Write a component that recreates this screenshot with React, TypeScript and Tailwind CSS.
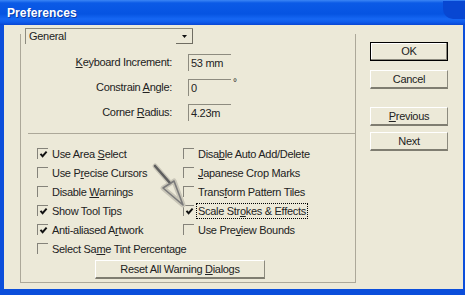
import type { ReactNode } from "react";

// Illustrator-style "Preferences" dialog, XP Luna frame

function Field({ label, value, degree }: { label: ReactNode; value: string; degree?: boolean }) {
  return (
    <div className="flex items-center h-[17px]">
      <span className="w-[151px] text-right whitespace-nowrap">{label}</span>
      <span className="ml-[16px] w-[43px] h-[17px] border-t border-l border-[#8d8b7f] pl-[2px] leading-[16px] whitespace-nowrap overflow-hidden">
        {value}
      </span>
      {degree && (
        <span className="self-start ml-[2px] -mt-[1px] text-[10px] leading-none">°</span>
      )}
    </div>
  );
}

function Check({
  checked = false,
  focused = false,
  children,
}: {
  checked?: boolean;
  focused?: boolean;
  children: ReactNode;
}) {
  return (
    <div className="flex items-center h-[19px] whitespace-nowrap">
      <span className="w-[11px] h-[11px] shrink-0 border-t border-l border-[#85837a] flex items-center justify-center">
        {checked && (
          <svg width="9" height="9" viewBox="0 0 9 9">
            <path d="M1.5 3.8 L3.6 6.2 L7.6 1.6" stroke="#111" strokeWidth="1.9" fill="none" />
          </svg>
        )}
      </span>
      <span
        className={`leading-[14px] ${
          focused ? "ml-[3px] px-[1px] outline outline-1 outline-dotted outline-black" : "ml-[4px]"
        }`}
      >
        {children}
      </span>
    </div>
  );
}

function Btn({ children, primary = false, className = "" }: { children: ReactNode; primary?: boolean; className?: string }) {
  return (
    <div
      className={`h-[19px] flex items-center justify-center whitespace-nowrap ${
        primary
          ? "border border-black shadow-[inset_-1px_-1px_0_#8c8a7e,inset_1px_1px_0_#fff]"
          : "border-t border-l border-t-white border-l-white border-r border-b-2 border-r-[#8c8a7e] border-b-[#7f7d71]"
      } ${className}`}
    >
      {children}
    </div>
  );
}

function Arrow() {
  return (
    <svg
      className="absolute left-0 top-0 pointer-events-none"
      width="465"
      height="295"
      viewBox="0 0 465 295"
    >
      <defs>
        <filter id="soft" x="-20%" y="-20%" width="140%" height="140%">
          <feGaussianBlur stdDeviation="0.7" />
        </filter>
      </defs>
      <g filter="url(#soft)" fill="none" strokeLinejoin="round" strokeLinecap="round">
        <path d="M155 166 L170 183 M163 188 L174 181 L183 205 Z" stroke="#c9c6b8" strokeWidth="5" />
        <path d="M155 166 L170 183" stroke="#5e5e5e" strokeWidth="2.6" />
        <path d="M163 188 L174 181 L183 205 Z" stroke="#7a7a7a" strokeWidth="1.6" />
      </g>
    </svg>
  );
}

export default function App() {
  return (
    <div className="relative w-[465px] h-[295px] overflow-hidden bg-[#0b4edb] flex flex-col font-['Liberation_Sans',Arial,sans-serif] text-[11px] tracking-[-0.3px] text-[#222]">
      <div className="h-[25px] shrink-0 flex items-center pl-[7px] bg-[linear-gradient(180deg,#3b86f5_0px,#0b5ae6_3px,#0654e2_14px,#1667f3_19px,#0f5cec_22px,#0846d4_25px)]">
        <span className="text-white font-bold text-[12px] tracking-[0.1px] [text-shadow:1px_1px_0_#0a3aa8]">
          Preferences
        </span>
        <span className="ml-auto w-[22px] h-[18px] -mt-[6px] rounded-bl-[10px] bg-[#0847d2]" />
      </div>

      <div className="flex-1 ml-[4px] mr-[2px] mb-[6px] bg-[#ece9d8] flex">
        {/* main group */}
        <div className="ml-[16px] mt-[3px] w-[336px] flex flex-col">
          <div className="ml-[5px] w-[168px] h-[16px] flex border-t border-l border-[#8d8b7f] relative z-10">
            <span className="flex-1 pl-[3px] leading-[14px]">General</span>
            <span className="w-[17px] h-[15px] border-r border-b border-[#6f6d62] flex items-center justify-center">
              <svg width="5" height="3" viewBox="0 0 5 3">
                <path d="M0 0 H5 L2.5 3 Z" fill="#111" />
              </svg>
            </span>
          </div>

          <div className="-mt-[10px] flex-1 mb-[6px] border-l border-r border-b border-[#aca899] flex flex-col">
            <div className="pt-[20px] flex flex-col gap-[8px]">
              <Field
                label={
                  <>
                    <u className="underline-offset-1">K</u>eyboard Increment:
                  </>
                }
                value="53 mm"
              />
              <Field
                label={
                  <>
                    Constrain <u className="underline-offset-1">A</u>ngle:
                  </>
                }
                value="0"
                degree
              />
              <Field
                label={
                  <>
                    Corner <u className="underline-offset-1">R</u>adius:
                  </>
                }
                value="4.23m"
              />
            </div>

            <div className="ml-[7px] mt-[12px] h-[1px] bg-[#aca899]" />

            <div className="mt-[10px] pl-[16px] flex">
              <div className="w-[146px] flex flex-col">
                <Check checked>
                  Use Area <u className="underline-offset-1">S</u>elect
                </Check>
                <Check>
                  Use P<u className="underline-offset-1">r</u>ecise Cursors
                </Check>
                <Check>
                  Disable <u className="underline-offset-1">W</u>arnings
                </Check>
                <Check checked>Show Tool Tips</Check>
                <Check checked>
                  Anti-aliased A<u className="underline-offset-1">r</u>twork
                </Check>
                <Check>
                  Select Sa<u className="underline-offset-1">m</u>e Tint Percentage
                </Check>
              </div>
              <div className="flex flex-col">
                <Check>
                  Disa<u className="underline-offset-1">b</u>le Auto Add/Delete
                </Check>
                <Check>
                  <u className="underline-offset-1">J</u>apanese Crop Marks
                </Check>
                <Check>
                  Trans<u className="underline-offset-1">f</u>orm Pattern Tiles
                </Check>
                <Check checked focused>
                  Scale Str<u className="underline-offset-1">o</u>kes &amp; Effects
                </Check>
                <Check>
                  Use Pre<u className="underline-offset-1">v</u>iew Bounds
                </Check>
              </div>
            </div>

            <Btn className="mt-[2px] ml-[74px] w-[170px]">
              <span>
                Reset All Warning <u className="underline-offset-1">D</u>ialogs
              </span>
            </Btn>
          </div>
        </div>

        {/* buttons */}
        <div className="ml-[14px] mt-[17px] w-[78px] flex flex-col">
          <Btn primary>OK</Btn>
          <Btn className="mt-[9px]">Cancel</Btn>
          <Btn className="mt-[18px]">
            <span>
              <u className="underline-offset-1">P</u>revious
            </span>
          </Btn>
          <Btn className="mt-[6px]">Next</Btn>
        </div>
      </div>

      <Arrow />
    </div>
  );
}
